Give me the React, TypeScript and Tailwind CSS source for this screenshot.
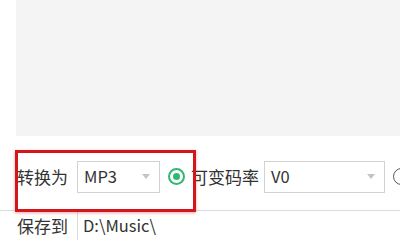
import React from 'react';

const Caret = () => (
  <svg width="8" height="5" viewBox="0 0 8 5" className="shrink-0">
    <path d="M0 0 L8 0 L4 5 Z" fill="#c4c4c4" />
  </svg>
);

const Select = ({ value, width }: { value: string; width: string }) => (
  <div className={`${width} shrink-0 h-[32px] border border-[#d2d2d2] bg-white flex items-center justify-between pl-[6px] pr-[9px]`}>
    <span className="text-[16.5px] text-[#333]">{value}</span>
    <Caret />
  </div>
);

const App = () => {
  return (
    <div className="relative w-[400px] h-[240px] overflow-hidden bg-white text-[#333] font-['Noto_Sans_CJK_SC','Noto_Sans',sans-serif]">
      <div className="ml-4 h-[136px] bg-[#f4f4f4]" />

      <div className="mt-[24px] h-[33px] flex items-center pl-[17px] whitespace-nowrap">
        <span className="shrink-0 text-[17px] leading-none">转换为</span>
        <div className="ml-[9px] shrink-0">
          <Select value="MP3" width="w-[83px]" />
        </div>
        <div className="ml-[8px] w-[17px] h-[17px] shrink-0 rounded-full border-2 border-[#2eb872] flex items-center justify-center">
          <div className="w-[7px] h-[7px] rounded-full bg-[#2eb872]" />
        </div>
        <span className="ml-[6px] shrink-0 text-[17px] leading-none">可变码率</span>
        <div className="ml-[5px] shrink-0">
          <Select value="V0" width="w-[121px]" />
        </div>
        <div className="ml-[8px] w-[17px] h-[17px] rounded-full border-[1.5px] border-[#555] shrink-0" />
      </div>

      <div className="mt-[17px] border-t border-[#dcdcdc] flex h-[30px]">
        <div className="w-[77px] shrink-0 pl-[17px] flex items-center text-[17px]">保存到</div>
        <div className="border-l border-[#dcdcdc] pl-[5px] flex items-center text-[16.5px]">D:\Music\</div>
      </div>

      <div className="absolute left-[15px] top-[150px] w-[181px] h-[62px] border-[3px] border-[#d3151c] shadow-[0_1px_3px_rgba(200,0,0,0.35)]" />
    </div>
  );
};

export default App;
